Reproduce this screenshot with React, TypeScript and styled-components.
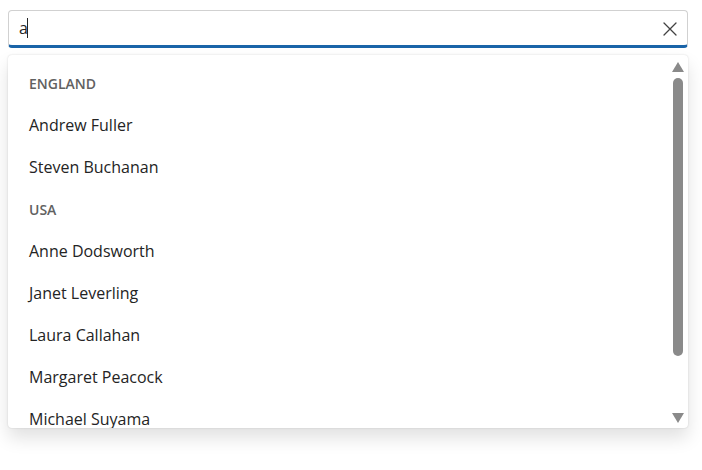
import React from "react";
import styled, { createGlobalStyle } from "styled-components";

const Global = createGlobalStyle`
  html, body { margin: 0; padding: 0; background: #ffffff; min-height: 100%; }
  html { height: 100%; }
  body {
    box-sizing: border-box;
    height: 100%;
    padding: 10px 14px 0 8px;
    font-family: "Segoe UI", "Open Sans", "Noto Sans", sans-serif;
    color: #242424;
  }
`;

const Wrapper = styled.div`
  width: 680px;
  display: flex;
  flex-direction: column;
  gap: 7px;
`;

const InputBox = styled.div`
  height: 38px;
  box-sizing: border-box;
  border: 1px solid #d1d1d1;
  border-bottom: 3px solid #1a64a8;
  border-radius: 4px;
  display: flex;
  align-items: center;
  padding: 0 9px 0 10px;
  background: #fff;
`;

const Value = styled.span`
  font-size: 16px;
  line-height: 20px;
  color: #242424;
  display: flex;
  align-items: center;
`;

const Caret = styled.span`
  width: 1px;
  height: 20px;
  background: #242424;
  margin-left: -1px;
`;

const Spacer = styled.div`
  flex: 1;
`;

const ClearButton = styled.button`
  border: 0;
  background: none;
  padding: 0;
  width: 16px;
  height: 16px;
  display: flex;
  align-items: center;
  justify-content: center;
  color: #424242;
  margin-top: 2px;
`;

const Popup = styled.div`
  height: 373px;
  background: #fff;
  border-radius: 4px;
  box-shadow: 0 10px 18px rgba(0, 0, 0, 0.12), 0 0 2px rgba(0, 0, 0, 0.16);
  display: flex;
  overflow: hidden;
`;

const List = styled.ul`
  list-style: none;
  margin: 0;
  padding: 7px 0 0 0;
  flex: 1;
  overflow: hidden;
`;

const Row = styled.li<{ $header?: boolean }>`
  height: 42px;
  display: flex;
  align-items: center;
  padding-left: 21px;
  font-size: ${(p) => (p.$header ? "14px" : "16px")};
  font-weight: ${(p) => (p.$header ? 600 : 400)};
  color: ${(p) => (p.$header ? "#616161" : "#242424")};
  white-space: nowrap;
`;

const ScrollBar = styled.div`
  width: 20px;
  display: flex;
  flex-direction: column;
  align-items: center;
  padding: 7px 0 5px 0;
  box-sizing: border-box;
  gap: 6px;
`;

const Arrow = styled.div<{ $down?: boolean }>`
  width: 0;
  height: 0;
  border-left: 6px solid transparent;
  border-right: 6px solid transparent;
  ${(p) =>
    p.$down
      ? "border-top: 10px solid #8a8a8a;"
      : "border-bottom: 10px solid #8a8a8a;"}
`;

const Track = styled.div`
  flex: 1;
  width: 10px;
  display: flex;
  flex-direction: column;
`;

const Thumb = styled.div`
  height: 278px;
  width: 10px;
  border-radius: 5px;
  background: #8a8a8a;
`;

type Item = { text: string; header?: boolean };

const items: Item[] = [
  { text: "ENGLAND", header: true },
  { text: "Andrew Fuller" },
  { text: "Steven Buchanan" },
  { text: "USA", header: true },
  { text: "Anne Dodsworth" },
  { text: "Janet Leverling" },
  { text: "Laura Callahan" },
  { text: "Margaret Peacock" },
  { text: "Michael Suyama" },
];

export default function App() {
  return (
    <>
      <Global />
      <Wrapper>
        <InputBox>
          <Value>
            a<Caret />
          </Value>
          <Spacer />
          <ClearButton aria-label="Clear">
            <svg width="14" height="14" viewBox="0 0 14 14">
              <path
                d="M1 1 L13 13 M13 1 L1 13"
                stroke="currentColor"
                strokeWidth="1.3"
                strokeLinecap="round"
              />
            </svg>
          </ClearButton>
        </InputBox>
        <Popup>
          <List>
            {items.map((it) => (
              <Row key={it.text} $header={it.header}>
                {it.text}
              </Row>
            ))}
          </List>
          <ScrollBar>
            <Arrow />
            <Track>
              <Thumb />
            </Track>
            <Arrow $down />
          </ScrollBar>
        </Popup>
      </Wrapper>
    </>
  );
}
